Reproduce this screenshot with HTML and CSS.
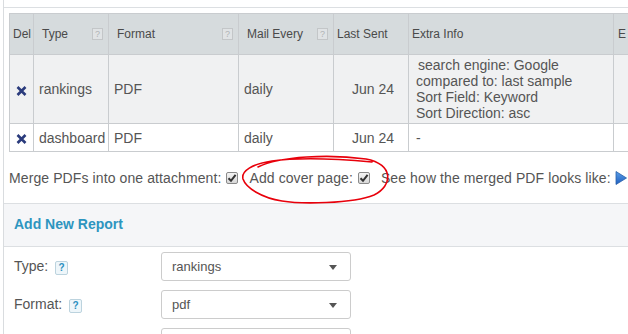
FILE: index.html
```html
<!DOCTYPE html>
<html>
<head>
  <title>Scheduled Reports</title>
  <link rel="stylesheet" href="styles.css">
</head>
<body>
  <div class="panel">
    <div class="topbar"></div>

    <div class="reports">
      <table class="report-table">
        <colgroup>
          <col class="w-del"><col class="w-type"><col class="w-format"><col class="w-mail">
          <col class="w-sent"><col class="w-extra"><col class="w-edit">
        </colgroup>
        <thead>
          <tr>
            <th class="th-del">Del</th>
            <th class="th-help">Type<span class="hint-box">?</span></th>
            <th class="th-help">Format<span class="hint-box">?</span></th>
            <th class="th-help">Mail Every<span class="hint-box">?</span></th>
            <th class="th-plain">Last Sent</th>
            <th class="th-plain">Extra Info</th>
            <th class="th-edit">E</th>
          </tr>
        </thead>
        <tbody>
          <tr class="row-alt">
            <td class="td-del"><svg class="del-icon" width="11" height="10" viewBox="0 0 11 10"><path d="M1.5 1 L9.5 9 M9.5 1 L1.5 9" /></svg></td>
            <td>rankings</td>
            <td>PDF</td>
            <td>daily</td>
            <td class="td-date">Jun 24</td>
            <td class="td-extra">
              <div class="first">search engine: Google</div>
              <div>compared to: last sample</div>
              <div>Sort Field: Keyword</div>
              <div>Sort Direction: asc</div>
            </td>
            <td></td>
          </tr>
          <tr class="row-short">
            <td class="td-del"><svg class="del-icon" width="11" height="10" viewBox="0 0 11 10"><path d="M1.5 1 L9.5 9 M9.5 1 L1.5 9" /></svg></td>
            <td>dashboard</td>
            <td>PDF</td>
            <td>daily</td>
            <td class="td-date">Jun 24</td>
            <td class="td-extra">-</td>
            <td></td>
          </tr>
        </tbody>
      </table>

      <div class="merge-row">
        <span>Merge PDFs into one attachment:</span>
        <span class="cb"><svg width="10" height="10" viewBox="0 0 10 10"><path d="M1.5 5.2 L4 7.8 L8.6 1.8" /></svg></span>
        <span class="gap">Add cover page:</span>
        <span class="cb"><svg width="10" height="10" viewBox="0 0 10 10"><path d="M1.5 5.2 L4 7.8 L8.6 1.8" /></svg></span>
        <span class="gap">See how the merged PDF looks like:</span>
        <svg class="play" width="12" height="14" viewBox="0 0 12 14">
          <defs>
            <linearGradient id="playfill" x1="0" y1="0" x2="0" y2="1">
              <stop offset="0" stop-color="#5a9ee8"/>
              <stop offset="1" stop-color="#1f5fc0"/>
            </linearGradient>
          </defs>
          <polygon points="1,0.5 11.5,7 1,13.5" fill="url(#playfill)" stroke="#2a5fa8" stroke-width="0.8"/>
        </svg>
      </div>
    </div>

    <div class="section-title">Add New Report</div>

    <div class="new-report">
      <div class="form-row">
        <label>Type: <span class="help">?</span></label>
        <div class="select">rankings<span class="caret"></span></div>
      </div>
      <div class="form-row">
        <label>Format: <span class="help">?</span></label>
        <div class="select">pdf<span class="caret"></span></div>
      </div>
      <div class="form-row">
        <label></label>
        <div class="select"></div>
      </div>
    </div>
  </div>

  <!-- hand-drawn annotation over the cover page option -->
  <svg class="annotation" width="628" height="334" viewBox="0 0 628 334">
    <path d="M258 167 C280 156, 330 154, 366 159 C394 164, 393 186, 374 195 C352 204, 300 204, 282 201 C262 198, 246 188, 243 179 C241 171, 252 164, 272 161 C300 157, 340 159, 372 162" />
  </svg>
</body>
</html>
```

FILE: styles.css
```css
body {
  margin: 0;
  font-family: "Liberation Sans", Arial, sans-serif;
  color: #555;
  background-color: white;
  width: 628px;
  height: 334px;
  overflow: hidden;
  position: relative;
}

.panel {
  margin-left: 3px;
  border-left: 1px solid #d9dcdf;
  height: 334px;
  overflow: hidden;
}

.topbar {
  height: 7px;
  border-bottom: 1px solid #dcdfe2;
}

.reports {
  padding: 5px 0 0 5px;
  border-bottom: 1px solid #dcdfe2;
}

.report-table {
  border-collapse: collapse;
  table-layout: fixed;
  width: 690px;
  font-size: 14px;
}

.w-del { width: 24px; }
.w-type { width: 75px; }
.w-format { width: 130px; }
.w-mail { width: 95px; }
.w-sent { width: 75px; }
.w-extra { width: 205px; }
.w-edit { width: 86px; }

.report-table th,
.report-table td {
  border: 1px solid #c9cccf;
  padding: 0 5px;
  text-align: left;
  white-space: nowrap;
  overflow: hidden;
}

.report-table th {
  background-color: #d6dbdd;
  color: #4a4a4a;
  font-weight: normal;
  font-size: 12px;
  height: 40px;
}

.th-del { padding-left: 3px !important; }
.th-plain { padding-left: 3px !important; }
.th-edit { padding-left: 4px !important; }

.th-help {
  padding-left: 8px !important;
  padding-right: 5px !important;
}

.hint-box {
  float: right;
  width: 9px;
  height: 10px;
  margin-top: 1px;
  border: 1px solid #c3c6c8;
  background-color: #e0e3e5;
  color: #b0b3b5;
  font-size: 9px;
  line-height: 10px;
  text-align: center;
}

.row-alt td {
  background-color: #f0f1f2;
  height: 68px;
}

.row-short td {
  height: 27px;
}

.td-del {
  padding: 0 !important;
  text-align: center !important;
}

.del-icon {
  display: block;
  margin: 3px auto 0 6px;
}

.del-icon path {
  stroke: #2a3b7c;
  stroke-width: 2.6;
  fill: none;
}

.td-date {
  text-align: right !important;
  padding-right: 14px !important;
}

.td-extra {
  padding-left: 7px !important;
  line-height: 16px;
}

.td-extra .first { padding-left: 2px; }

.merge-row {
  height: 51px;
  display: flex;
  align-items: center;
  font-size: 14px;
  letter-spacing: 0.1px;
  white-space: nowrap;
}

.cb {
  display: inline-block;
  width: 10px;
  height: 10px;
  margin-left: 5px;
  border: 1px solid #8a8a8a;
  border-radius: 2px;
  background: linear-gradient(#f4f4f4, #d8d8d8);
}

.cb svg { display: block; }

.cb path {
  fill: none;
  stroke: #333;
  stroke-width: 2;
}

.gap { margin-left: 11px; }

.play { margin-left: 4px; }

.section-title {
  height: 42px;
  line-height: 40px;
  padding-left: 10px;
  background-color: #f5f6f8;
  border-bottom: 1px solid #dcdfe2;
  color: #2d95bf;
  font-weight: bold;
  font-size: 14px;
}

.new-report {
  padding: 5px 0 0 10px;
}

.form-row {
  display: flex;
  align-items: center;
  margin-bottom: 9px;
}

.form-row label {
  width: 147px;
  font-size: 14px;
  color: #555;
}

.help {
  display: inline-block;
  width: 11px;
  height: 12px;
  margin-left: 3px;
  border: 1px solid #bcd3de;
  border-radius: 2px;
  background-color: #eef6fa;
  color: #2a8fc0;
  font-size: 10px;
  font-weight: bold;
  line-height: 12px;
  text-align: center;
  vertical-align: 0;
}

.select {
  position: relative;
  width: 178px;
  height: 27px;
  line-height: 27px;
  padding-left: 10px;
  border: 1px solid #ccc;
  border-radius: 3px;
  font-size: 13px;
  color: #555;
}

.caret {
  position: absolute;
  right: 13px;
  top: 12px;
  border-top: 5px solid #555;
  border-left: 4px solid transparent;
  border-right: 4px solid transparent;
}

.annotation {
  position: absolute;
  left: 0;
  top: 0;
  pointer-events: none;
}

.annotation path {
  fill: none;
  stroke: #e8000b;
  stroke-width: 1.6;
  stroke-linecap: round;
}
```
